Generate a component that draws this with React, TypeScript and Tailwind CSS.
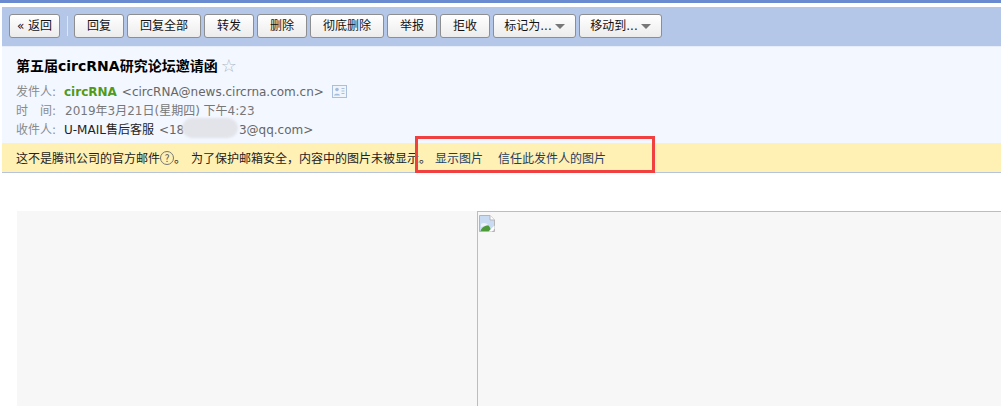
const font = "font-['DejaVu_Sans','Noto_Sans_CJK_SC',sans-serif]";

function ToolButton({ label, width, menu }: { label: string; width: string; menu?: boolean }) {
  return (
    <button
      className={`${width} h-[24px] shrink-0 flex items-center justify-center gap-[3px] rounded-[3px] border border-[#8e8e8e] bg-gradient-to-b from-white to-[#ececec] text-[12px] text-[#111] ${font}`}
    >
      <span>{label}</span>
      {menu && <span className="w-0 h-0 border-x-[5px] border-x-transparent border-t-[5px] border-t-[#777]" />}
    </button>
  );
}

function CardIcon() {
  return (
    <svg width="15" height="13" viewBox="0 0 15 13" className="ml-[8px]">
      <rect x="0.5" y="0.5" width="14" height="12" fill="#f0f5fc" stroke="#a9bfdc" />
      <circle cx="5" cy="4.5" r="1.8" fill="#a3bcdc" />
      <path d="M2 10.5 C2 8 8 8 8 10.5 Z" fill="#a3bcdc" />
      <path d="M9.5 3.5h3M9.5 6h3M9.5 8.5h3" stroke="#a9bfdc" />
    </svg>
  );
}

function BrokenImage() {
  return (
    <svg width="16" height="17" viewBox="0 0 16 17" className="block">
      <path d="M0.5 0.5H11L15.5 5V16.5H0.5Z" fill="#c9daf3" stroke="#b5b5b5" />
      <path d="M11 0.5V5H15.5" fill="#fff" stroke="#b5b5b5" />
      <path d="M2 9 C4 7 8 8 9 10 L2 12 Z" fill="#eef3fb" />
      <path d="M1.5 16 C3 12 6 10.5 9.5 10.5 C11 12 11.5 14 12 16 Z" fill="#4c9a3a" />
      <path d="M9.5 16.5 L15.5 10.5 V13.5 L13 16.5 Z" fill="#fff" />
    </svg>
  );
}

export default function App() {
  return (
    <div className={`relative w-[1001px] h-[406px] overflow-hidden bg-white ${font}`}>
      <div className="h-[3px] bg-[#6b8bd0]" />
      <div className="pl-[2px] pt-[4px]">
        <div className="h-[39px] bg-[#b4c7e8] flex items-center pl-[7px] pb-[1px]">
          <ToolButton label="« 返回" width="w-[51px]" />
          <div className="w-[1px] h-[20px] bg-[#dfe6f3] mx-[6.5px]" />
          <div className="flex gap-[3px]">
            <ToolButton label="回复" width="w-[50px]" />
            <ToolButton label="回复全部" width="w-[74px]" />
            <ToolButton label="转发" width="w-[50px]" />
            <ToolButton label="删除" width="w-[50px]" />
            <ToolButton label="彻底删除" width="w-[74px]" />
            <ToolButton label="举报" width="w-[50px]" />
            <ToolButton label="拒收" width="w-[50px]" />
            <ToolButton label="标记为..." width="w-[83px]" menu />
            <ToolButton label="移动到..." width="w-[83px]" menu />
          </div>
        </div>
        <div className="h-[97px] bg-[#f3f7ff] pl-[14px] pt-[8px] text-[12px] border-t border-[#e6edf9]">
          <div className="flex items-center h-[22px] text-[14px] font-bold text-black">
            第五届circRNA研究论坛邀请函
            <span className="ml-[3px] text-[18px] font-normal leading-none text-[#b0b8c6]">☆</span>
          </div>
          <div className="flex items-center h-[19px] mt-[5px] text-[#8a8a8a]">
            <span className="w-[48px]">发件人:</span>
            <span className="font-bold text-[#4f9a1c]">circRNA</span>
            <span className="ml-[5px] text-[#666]">&lt;circRNA@news.circrna.com.cn&gt;</span>
            <CardIcon />
          </div>
          <div className="flex items-center h-[19px] text-[#777]">
            <span className="w-[49px] text-[#8a8a8a]">时　间:</span>
            <span>2019年3月21日(星期四) 下午4:23</span>
          </div>
          <div className="flex items-center h-[19px] text-[#666]">
            <span className="w-[48px] text-[#8a8a8a]">收件人:</span>
            <span className="text-[#222]">U-MAIL售后客服</span>
            <span className="ml-[5px] w-[54px] overflow-hidden whitespace-nowrap">&lt;18</span>
            <span className="w-[26px] h-[20px]" />
            <span>3@qq.com&gt;</span>
          </div>
        </div>
        <div className="h-[30px] bg-[#fff0b4] border-b border-[#b5c3dc] pl-[14px] flex items-center text-[12px] text-[#222] font-['Noto_Sans_CJK_SC',sans-serif]">
          <span>这不是腾讯公司的官方邮件</span>
          <span className="w-[14px] h-[14px] rounded-full border border-[#777] text-[10px] leading-[12px] text-center text-[#555]">?</span>
          <span>。</span>
          <span className="ml-[5px]">为了保护邮箱安全，内容中的图片未被显示。</span>
          <span className="ml-[4px] text-[#1f3f66]">显示图片</span>
          <span className="ml-[15px] text-[#1f3f66]">信任此发件人的图片</span>
        </div>
        <div className="pt-[38px] pl-[15px] flex">
          <div className="w-[460px] h-[195px] bg-[#f7f7f7]" />
          <div className="flex-1 h-[195px] bg-[#f7f7f7] border-l border-t border-[#bdbdbd] pl-[1px] pt-[3px]">
            <BrokenImage />
          </div>
        </div>
      </div>

      {/* 打码 */}
      <div className="absolute left-[182px] top-[118px] w-[56px] h-[20px] rounded-[10px] bg-[#e2e4ea] blur-[1px]" />
      {/* 红框标注 */}
      <div className="absolute left-[415px] top-[136px] w-[240px] h-[37px] border-[3px] border-[#f04040]" />
    </div>
  );
}
